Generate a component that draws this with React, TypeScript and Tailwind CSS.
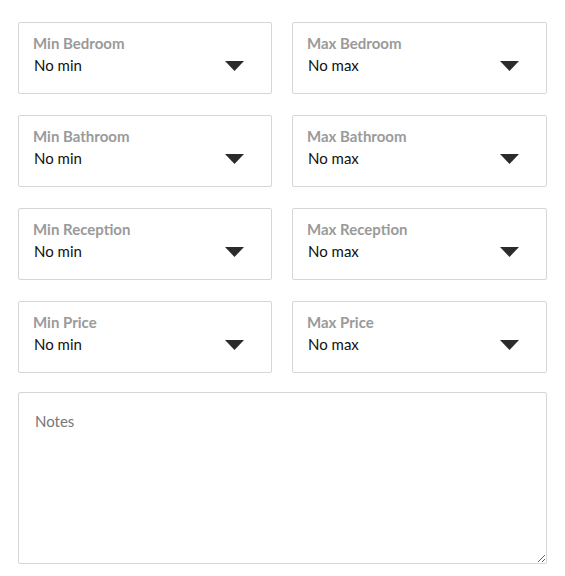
import React from "react";

const rows = [
  ["Min Bedroom", "Max Bedroom"],
  ["Min Bathroom", "Max Bathroom"],
  ["Min Reception", "Max Reception"],
  ["Min Price", "Max Price"],
];

function Select({ label, value }: { label: string; value: string }) {
  return (
    <div className="h-[72px] rounded-[2px] border border-[#d6d6d6] bg-white pl-[14px] pr-[27px] pt-[9px] flex flex-col">
      <div className="text-[15px] leading-[22px] font-bold text-[#9a9a9a]">{label}</div>
      <div className="flex items-center justify-between">
        <span className="text-[15px] leading-[22px] text-[#111] pl-[1px]">{value}</span>
        <svg width="19" height="10" viewBox="0 0 19 10" className="mt-[2px]">
          <polygon points="0,0 19,0 9.5,10" fill="#2b2b2b" />
        </svg>
      </div>
    </div>
  );
}

export default function App() {
  return (
    <div
      className="w-[565px] h-[576px] bg-white px-[18px] pt-[22px]"
      style={{ fontFamily: "Lato, 'Open Sans', sans-serif" }}
    >
      <div className="grid grid-cols-[254px_255px] gap-x-[20px] gap-y-[21px]">
        {rows.map(([a, b]) => (
          <React.Fragment key={a}>
            <Select label={a} value="No min" />
            <Select label={b} value="No max" />
          </React.Fragment>
        ))}
      </div>
      <textarea
        placeholder="Notes"
        className="mt-[19px] block w-[529px] h-[172px] rounded-[2px] border border-[#d6d6d6] px-[16px] py-[18px] text-[15px] leading-[20px] placeholder:text-[#777] outline-none"
        style={{ fontFamily: "Lato, 'Open Sans', sans-serif" }}
      />
    </div>
  );
}
